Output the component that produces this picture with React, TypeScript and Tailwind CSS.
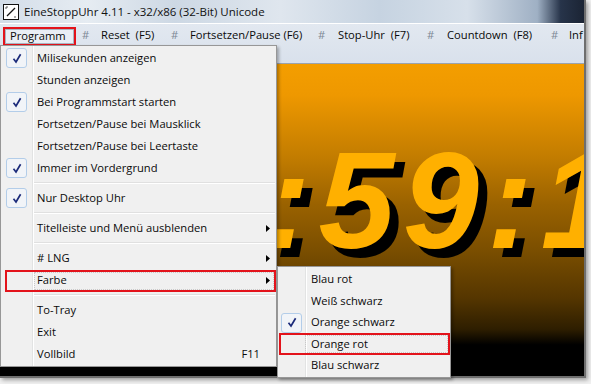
import React from 'react';

const FONT = { fontFamily: '"Open Sans", "Noto Sans", sans-serif' };

const MENUBAR = [
  { label: 'Programm', w: 'w-[73px]', active: true },
  { label: '#', w: 'w-[19px]', hash: true },
  { label: 'Reset  (F5)', w: 'w-[70px]' },
  { label: '#', w: 'w-[19px]', hash: true },
  { label: 'Fortsetzen/Pause (F6)', w: 'w-[128px]' },
  { label: '#', w: 'w-[20px]', hash: true },
  { label: 'Stop-Uhr  (F7)', w: 'w-[89px]' },
  { label: '#', w: 'w-[20px]', hash: true },
  { label: 'Countdown  (F8)', w: 'w-[104px]' },
  { label: '#', w: 'w-[18px]', hash: true },
  { label: 'Inf', w: 'w-[20px]' },
];

type Entry =
  | { sep: true }
  | { sep?: false; label: string; checked?: boolean; arrow?: boolean; shortcut?: string; boxed?: boolean };

const PROGRAMM: Entry[] = [
  { label: 'Milisekunden anzeigen', checked: true },
  { label: 'Stunden anzeigen' },
  { label: 'Bei Programmstart starten', checked: true },
  { label: 'Fortsetzen/Pause bei Mausklick' },
  { label: 'Fortsetzen/Pause bei Leertaste' },
  { label: 'Immer im Vordergrund', checked: true },
  { sep: true },
  { label: 'Nur Desktop Uhr', checked: true },
  { sep: true },
  { label: 'Titelleiste und Menü ausblenden', arrow: true },
  { sep: true },
  { label: '# LNG', arrow: true },
  { label: 'Farbe', arrow: true, boxed: true },
  { sep: true },
  { label: 'To-Tray' },
  { label: 'Exit' },
  { label: 'Vollbild', shortcut: 'F11' },
];

const FARBE = [
  { label: 'Blau rot' },
  { label: 'Weiß schwarz' },
  { label: 'Orange schwarz', checked: true },
  { label: 'Orange rot', boxed: true },
  { label: 'Blau schwarz' },
];

function Check() {
  return (
    <div className="w-[21px] h-[20px] rounded-[3px] border border-[#b3cde9] bg-[#f1f4f8] flex items-center justify-center">
      <svg width="10" height="11" viewBox="0 0 10 11">
        <path d="M1.5 5.8 L4 9 L8.6 1.2" stroke="#1b2a7a" strokeWidth="1.7" fill="none" />
      </svg>
    </div>
  );
}

function Arrow() {
  return (
    <svg width="4" height="7" viewBox="0 0 4 7">
      <path d="M0 0 L4 3.5 L0 7 Z" fill="#000" />
    </svg>
  );
}

function AppIcon() {
  return (
    <svg width="16" height="16" viewBox="0 0 16 16">
      <rect x="0.5" y="0.5" width="15" height="15" fill="#fff" stroke="#111" />
      <path d="M4 12 L12 4" stroke="#111" strokeWidth="1.3" />
      <path d="M3 3 L5 3 M3 3 L3 5 M11 13 L13 13" stroke="#555" strokeWidth="1" />
    </svg>
  );
}

function MenuItem({ e }: { e: Exclude<Entry, { sep: true }> }) {
  return (
    <div className="relative h-[22px] flex items-center pr-[6px]">
      <div className="w-[36px] pl-[5px] flex items-center">{e.checked && <Check />}</div>
      <span className="flex-1">{e.label}</span>
      {e.shortcut && <span className="pr-[10px]">{e.shortcut}</span>}
      {e.arrow && <Arrow />}
      {e.boxed && (
        <div className="absolute left-[4px] right-0 top-[1px] bottom-[-1px] border-2 border-[#e3131b]">
          <div className="h-full ml-[27px] border border-dotted border-[#c9c9c9]" />
        </div>
      )}
    </div>
  );
}

export default function App() {
  return (
    <div className="relative w-[591px] h-[384px] overflow-hidden bg-[#f0f0f0] text-[11.2px] text-[#0a0a0a]" style={FONT}>
      {/* window */}
      <div className="w-[586px] h-[378px] flex flex-col border-r-2 border-b-2 border-[#6e6e6e] shadow-[2px_2px_4px_rgba(0,0,0,0.35)]">
        {/* title bar */}
        <div className="h-[23px] flex items-center gap-[5px] pl-[3px] bg-[linear-gradient(to_right,#d3dde8_0%,#e6ecf2_15%,#cdd8e4_30%,#dfe6ee_48%,#c6d3e1_65%,#d7e0ea_80%,#9fb0c4_92%,#27344a_96%,#1b2434_100%)]">
          <AppIcon />
          <span className="text-[11.5px] text-[#111]">EineStoppUhr 4.11 - x32/x86 (32-Bit) Unicode</span>
        </div>
        {/* menu bar, two rows */}
        <div className="h-[41px] flex flex-col border-t border-white bg-[linear-gradient(to_bottom,#e2e8f0,#d9e1ec)] border-b border-b-[#9ba3ad]">
          <div className="h-[22px] flex items-center overflow-hidden">
            {MENUBAR.map((m, i) => (
              <div key={i} className={`${m.w} shrink-0 ${i === 0 ? 'ml-[3px]' : ''} h-full flex items-center`}>
                {m.active ? (
                  <div className="w-full h-[19px] mt-[3px] border-2 border-[#e3131b] flex items-center">
                    <div className="w-full h-full border border-[#a9b3c0] bg-[#e9eef5] flex items-center pl-[4px]">{m.label}</div>
                  </div>
                ) : (
                  <span className={`pl-[6px] whitespace-pre ${m.hash ? 'text-[#7d8896]' : ''}`}>{m.label}</span>
                )}
              </div>
            ))}
          </div>
          <div className="flex-1" />
        </div>
        {/* clock area */}
        <div className="flex-1 overflow-hidden bg-[linear-gradient(to_bottom,#f49e00_0%,#ee9800_10%,#c27c00_30%,#9a6200_45%,#7a4e00_60%,#553600_75%,#2e1e00_85%,#000_90%,#000_100%)]">
          <div className="h-[198px] overflow-hidden">
            <div
              className="pt-[75px] pl-[265px] whitespace-nowrap leading-[0.9] text-[137px] tracking-[8px] font-bold italic text-[#ffb000] [text-shadow:9px_9px_0_#000]"
              style={{ fontFamily: '"Liberation Sans", Arial, sans-serif' }}
            >
              :59:12
            </div>
          </div>
        </div>
      </div>

      {/* Programm dropdown */}
      <div className="absolute left-0 top-[45px] w-[277px] h-[322px] pt-px border border-[#979797] bg-[#f0f0f0] bg-[linear-gradient(to_right,transparent_31px,#e2e3e3_31px,#e2e3e3_32px,#fff_32px,#fff_33px,transparent_33px)] shadow-[2px_2px_3px_rgba(0,0,0,0.3)]">
        {PROGRAMM.map((e, i) =>
          e.sep ? (
            <div key={i} className="h-[8px] flex items-center pl-[33px] pr-px">
              <div className="w-full h-[2px] border-t border-[#e0e0e0] border-b border-b-white" />
            </div>
          ) : (
            <MenuItem key={i} e={e} />
          )
        )}
      </div>

      {/* Farbe submenu */}
      <div className="absolute left-[277px] top-[266px] w-[174px] h-[112px] pt-[2px] border border-[#979797] bg-[#f0f0f0] bg-[linear-gradient(to_right,transparent_27px,#e2e3e3_27px,#e2e3e3_28px,#fff_28px,#fff_29px,transparent_29px)] shadow-[2px_2px_3px_rgba(0,0,0,0.3)]">
        {FARBE.map((e, i) => (
          <div key={i} className="relative h-[21.5px] flex items-center">
            <div className="w-[33px] pl-[3px] flex items-center">{e.checked && <Check />}</div>
            <span>{e.label}</span>
            {e.boxed && (
              <div className="absolute left-[1px] right-0 top-[-1px] bottom-0 border-2 border-[#e3131b]">
                <div className="h-full ml-[24px] border border-dotted border-[#c9c9c9]" />
              </div>
            )}
          </div>
        ))}
      </div>
    </div>
  );
}
